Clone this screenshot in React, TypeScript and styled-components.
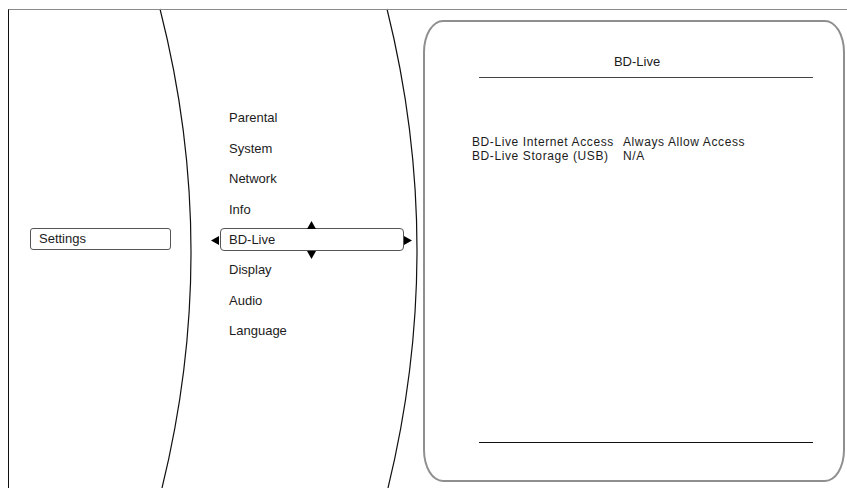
import styled, { createGlobalStyle } from "styled-components";

const GlobalStyle = createGlobalStyle`
  html, body {
    margin: 0;
    padding: 0;
    background: #ffffff;
  }
  body {
    font-family: "Liberation Sans", Arial, sans-serif;
    font-size: 13px;
    color: #1c1c1c;
  }
`;

const menuItems = [
  "Parental",
  "System",
  "Network",
  "Info",
  "BD-Live",
  "Display",
  "Audio",
  "Language",
];

const details = [
  { label: "BD-Live Internet Access", value: "Always Allow Access" },
  { label: "BD-Live Storage (USB)", value: "N/A" },
];

export default function App() {
  const selected = "BD-Live";

  return (
    <Screen>
      <GlobalStyle />
      {/* decorative arcs behind the menu columns */}
      <Arcs viewBox="0 0 847 488" width="847" height="488">
        <path d="M160 9 Q221 248 162 488" />
        <path d="M387 9 Q446.5 248 388 488" />
      </Arcs>
      <Frame>
        <SidePane>
          <SettingsBox>Settings</SettingsBox>
        </SidePane>
        <MenuPane>
          {menuItems.map((item) => (
            <MenuRow key={item}>
              <MenuItem $selected={item === selected}>{item}</MenuItem>
              {item === selected && (
                <>
                  <Arrow $left={11} $top={11.5} width="8" height="9" viewBox="0 0 8 9">
                    <polygon points="8,0 8,9 0,4.5" />
                  </Arrow>
                  <Arrow $left={204} $top={11.5} width="8" height="9" viewBox="0 0 8 9">
                    <polygon points="0,0 0,9 8,4.5" />
                  </Arrow>
                  <Arrow $left={107} $top={-3.6} width="9" height="8" viewBox="0 0 9 8">
                    <polygon points="0,8 9,8 4.5,0" />
                  </Arrow>
                  <Arrow $left={107} $top={26.6} width="9" height="8" viewBox="0 0 9 8">
                    <polygon points="0,0 9,0 4.5,8" />
                  </Arrow>
                </>
              )}
            </MenuRow>
          ))}
        </MenuPane>
        <Panel>
          <PanelTitle>BD-Live</PanelTitle>
          <Rule />
          <DetailGrid>
            {details.map((d) => (
              <DetailRow key={d.label}>
                <span>{d.label}</span>
                <span>{d.value}</span>
              </DetailRow>
            ))}
          </DetailGrid>
          <Rule $bottom />
        </Panel>
      </Frame>
    </Screen>
  );
}

const Screen = styled.div`
  position: relative;
  width: 847px;
  height: 488px;
  overflow: hidden;
`;

const Arcs = styled.svg`
  position: absolute;
  left: 0;
  top: 0;
  pointer-events: none;

  path {
    fill: none;
    stroke: #111111;
    stroke-width: 1.2;
  }
`;

const Frame = styled.div`
  position: relative;
  box-sizing: border-box;
  margin: 9px 0 0 8px;
  width: 839px;
  height: 479px;
  border-top: 1px solid #8a8a8a;
  border-left: 1px solid #111111;
  display: flex;
`;

const SidePane = styled.div`
  width: 191px;
  flex-shrink: 0;
  box-sizing: border-box;
  padding: 218px 0 0 21px;
`;

const SettingsBox = styled.div`
  box-sizing: border-box;
  width: 141px;
  height: 22px;
  border: 1px solid #555555;
  border-radius: 3px;
  padding-left: 8px;
  line-height: 20px;
  background: #ffffff;
`;

const MenuPane = styled.div`
  width: 223px;
  flex-shrink: 0;
  box-sizing: border-box;
  padding-top: 92.8px;
  display: flex;
  flex-direction: column;
`;

const MenuRow = styled.div`
  position: relative;
  height: 30.4px;
  display: flex;
  align-items: center;
`;

const MenuItem = styled.div<{ $selected?: boolean }>`
  box-sizing: border-box;
  margin-left: 20px;
  width: 184px;
  height: 23px;
  padding-left: 8px;
  line-height: 21px;
  border: 1px solid ${(p) => (p.$selected ? "#555555" : "transparent")};
  border-radius: 4px;
  background: ${(p) => (p.$selected ? "#ffffff" : "transparent")};
`;

const Arrow = styled.svg<{ $left: number; $top: number }>`
  position: absolute;
  left: ${(p) => p.$left}px;
  top: ${(p) => p.$top}px;

  polygon {
    fill: #000000;
  }
`;

const Panel = styled.div`
  box-sizing: border-box;
  margin-top: 10px;
  width: 422px;
  height: 462px;
  border: 2px solid #8f8f8f;
  border-radius: 20px / 32px;
  background: #ffffff;
  display: flex;
  flex-direction: column;
`;

const PanelTitle = styled.div`
  padding: 32px 0 0 6px;
  line-height: 16px;
  text-align: center;
`;

const Rule = styled.div<{ $bottom?: boolean }>`
  margin: ${(p) => (p.$bottom ? "auto 0 37px 54px" : "7px 0 0 54px")};
  width: 334px;
  height: 1px;
  background: ${(p) => (p.$bottom ? "#111111" : "#444444")};
`;

const DetailGrid = styled.div`
  margin-top: 58px;
  padding-left: 47px;
  display: flex;
  flex-direction: column;
  font-size: 12px;
  letter-spacing: 0.6px;
`;

const DetailRow = styled.div`
  display: grid;
  grid-template-columns: 151px auto;
  line-height: 13.8px;
`;
